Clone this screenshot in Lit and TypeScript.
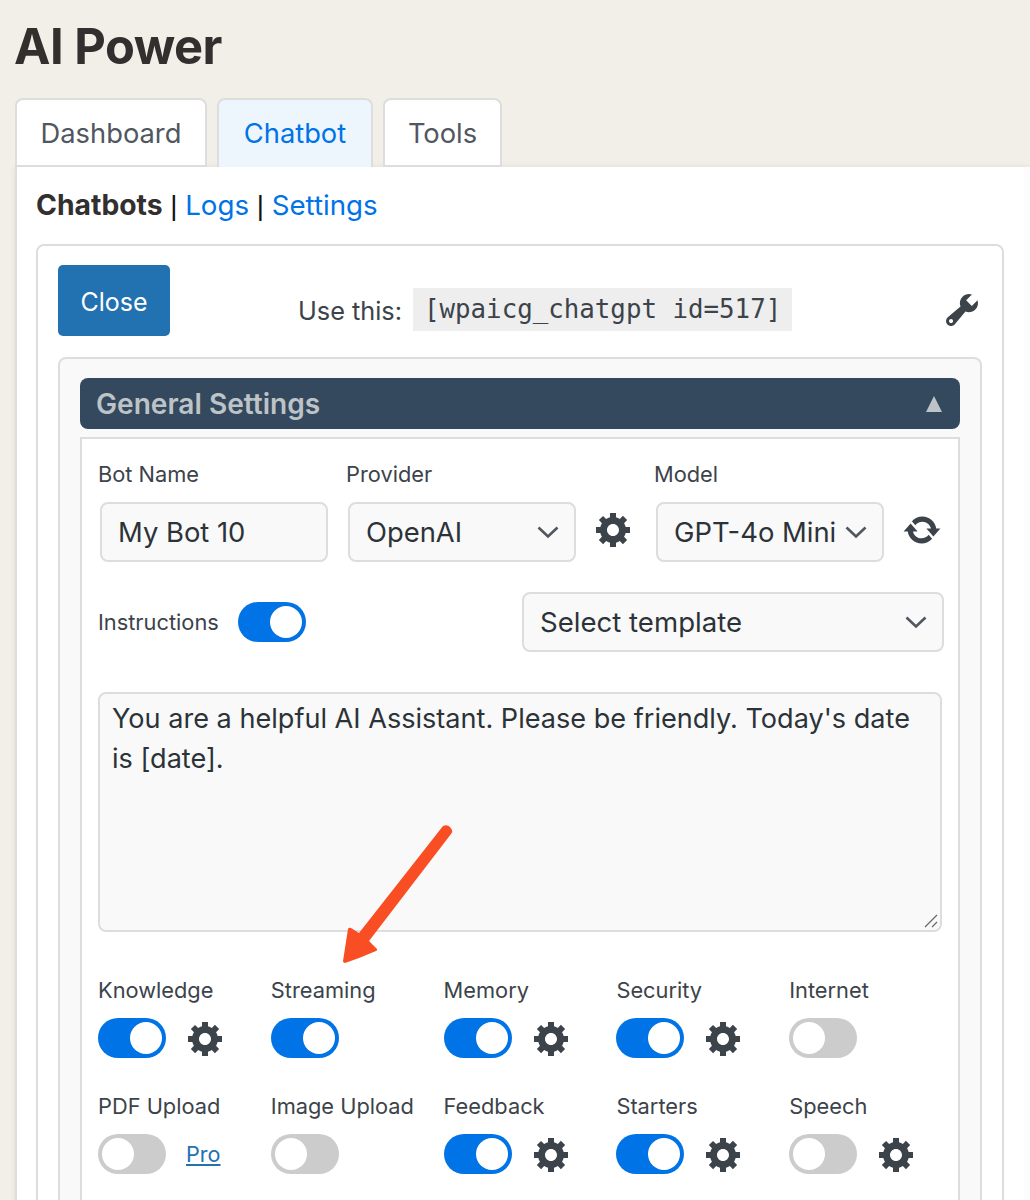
import { LitElement, css, html, svg } from 'lit';
import { customElement } from 'lit/decorators.js';

const gearPath =
  'M18 12h-2.18c-.17.7-.44 1.35-.81 1.93l1.54 1.54-2.1 2.1-1.54-1.54c-.58.36-1.23.63-1.91.79V19H8v-2.18c-.68-.16-1.33-.43-1.91-.79l-1.54 1.54-2.12-2.12 1.54-1.54c-.36-.58-.63-1.23-.79-1.91H1V9.03h2.17c.16-.7.44-1.35.8-1.94L2.43 5.55l2.1-2.1 1.54 1.54c.58-.37 1.24-.64 1.93-.81V2h3v2.18c.68.16 1.33.43 1.91.79l1.54-1.54 2.12 2.12-1.54 1.54c.36.59.64 1.24.8 1.94H18V12zm-8.5 1.5c1.66 0 3-1.34 3-3s-1.34-3-3-3-3 1.34-3 3 1.34 3 3 3z';
const wrenchPath =
  'M16.68 9.77c-1.34 1.34-3.3 1.67-4.95.99l-5.41 6.52c-.99.99-2.59.99-3.58 0s-.99-2.59 0-3.57l6.52-5.42c-.68-1.65-.35-3.61.99-4.95 1.28-1.28 3.12-1.62 4.72-1.06l-2.89 2.89 2.82 2.82 2.86-2.87c.53 1.58.18 3.39-1.08 4.67zM3.81 16.21c.4.39 1.04.39 1.43 0 .4-.4.4-1.04 0-1.43-.39-.4-1.03-.4-1.43 0-.39.39-.39 1.03 0 1.43z';
const refreshPath =
  'M10.2 3.28c3.53 0 6.43 2.61 6.92 6h2.08l-3.5 4-3.5-4h2.32c-.45-1.97-2.21-3.45-4.32-3.45-1.45 0-2.73.71-3.54 1.78L4.95 5.66C6.23 4.2 8.11 3.28 10.2 3.28zm-.4 13.44c-3.52 0-6.43-2.61-6.92-6H.8l3.5-4c1.17 1.33 2.33 2.67 3.5 4H5.48c.45 1.97 2.21 3.45 4.32 3.45 1.45 0 2.73-.71 3.54-1.77l1.71 1.95c-1.28 1.46-3.15 2.37-5.25 2.37z';

const icon = (d: string, cls = '') =>
  html`<svg class="icon ${cls}" viewBox="0 0 20 20" fill="currentColor">${svg`<path d=${d}></path>`}</svg>`;

const chevron = html`<svg class="chevron" viewBox="0 0 24 14" fill="none">
  <path d="M2.5 2.5 12 11.5 21.5 2.5" stroke="#50575e" stroke-width="2.6"></path>
</svg>`;

const toggles = [
  { label: 'Knowledge', on: true, gear: true },
  { label: 'Streaming', on: true },
  { label: 'Memory', on: true, gear: true },
  { label: 'Security', on: true, gear: true },
  { label: 'Internet', on: false },
  { label: 'PDF Upload', on: false, pro: true },
  { label: 'Image Upload', on: false },
  { label: 'Feedback', on: true, gear: true },
  { label: 'Starters', on: true, gear: true },
  { label: 'Speech', on: false, gear: true },
];

@customElement('app-root')
export class AppRoot extends LitElement {
  static styles = css`
    :host {
      display: block;
      height: 1200px;
      overflow: hidden;
      position: relative;
      background: #f1efe8;
      font-family: Inter, 'Liberation Sans', sans-serif;
      color: #3c434a;
    }

    h1 {
      margin: 0;
      padding: 21px 0 0 14px;
      height: 98px;
      box-sizing: border-box;
      font-size: 48.8px;
      line-height: 52px;
      font-weight: 700;
      letter-spacing: -0.5px;
      color: #32302e;
    }

    .tabs {
      display: flex;
      gap: 10px;
      padding-left: 15px;
      height: 69px;
    }

    .tab {
      box-sizing: border-box;
      height: 69px;
      padding-top: 15px;
      text-align: center;
      font-size: 27.3px;
      line-height: 38px;
      color: #50575e;
      background: #fff;
      border: 2px solid #ddd;
      border-radius: 8px 8px 0 0;
    }

    .tab.dash { width: 192px; }
    .tab.bot { width: 156px; color: #0073e6; background: #eef6fd; border-bottom: 0; }
    .tab.tools { width: 119px; }

    .card {
      box-sizing: border-box;
      margin-left: 15px;
      height: 1100px;
      padding: 19px 20px 0 19px;
      background: linear-gradient(to right, #fff calc(100% - 6px), #fcfcfc calc(100% - 6px));
      border-left: 2px solid #ddd;
      box-shadow: 0 0 6px rgba(0, 0, 0, 0.08);
    }

    .subnav {
      font-size: 27.7px;
      line-height: 38px;
      color: #111;
      height: 58px;
    }

    .subnav b { color: #32302e; font-weight: 700; font-size: 28.3px; }
    .subnav a { color: #0073e6; text-decoration: none; }
    .subnav .sep { font-family: 'Liberation Sans', sans-serif; }

    .outer {
      box-sizing: border-box;
      width: 968px;
      height: 1000px;
      padding: 19px 20px;
      border: 2px solid #ddd;
      border-radius: 8px 8px 0 0;
    }

    .top {
      display: flex;
      align-items: flex-start;
      height: 92px;
    }

    .close {
      box-sizing: border-box;
      width: 112px;
      height: 71px;
      padding: 2px 0 0;
      border: 0;
      border-radius: 5px;
      background: #2271b1;
      color: #fff;
      font: 400 25px Inter, sans-serif;
    }

    .use {
      display: flex;
      align-items: center;
      margin-left: 128px;
      margin-top: 23px;
      height: 43px;
      font-size: 25.3px;
      white-space: nowrap;
    }

    .use span { padding-top: 2px; }

    code {
      box-sizing: border-box;
      width: 379px;
      height: 43px;
      margin-left: 11px;
      padding-left: 11px;
      background: #eeeeee;
      font: 25.8px/43px 'DejaVu Sans Mono', monospace;
      color: #3c434a;
      white-space: nowrap;
    }

    .icon {
      display: block;
      width: 40px;
      height: 40px;
      flex: none;
      color: #3c434a;
    }

    .wrench { margin: 25px 0 0 150px; }

    .inner {
      box-sizing: border-box;
      width: 924px;
      height: 900px;
      padding: 19px 20px;
      background: #f9f9f9;
      border: 2px solid #ddd;
      border-radius: 8px 8px 0 0;
    }

    .head {
      display: flex;
      align-items: center;
      justify-content: space-between;
      height: 51px;
      padding: 0 18px 0 16px;
      border-radius: 8px;
      background: #34495e;
      color: #bdc3c7;
      font-size: 28.1px;
      font-weight: 600;
    }

    .tri {
      width: 0;
      height: 0;
      border-left: 8px solid transparent;
      border-right: 8px solid transparent;
      border-bottom: 16px solid #bdc3c7;
    }

    .panel {
      box-sizing: border-box;
      height: 800px;
      margin-top: 8px;
      padding: 20px 16px 0;
      background: #fff;
      border: 2px solid #ddd;
      border-bottom: 0;
    }

    .row-fields {
      display: grid;
      grid-template-columns: 248px 308px 1fr;
    }

    .lbl {
      font-size: 21.8px;
      line-height: 30px;
      color: #3c434a;
      white-space: nowrap;
    }

    .field-line {
      display: flex;
      align-items: center;
      margin-top: 13px;
      padding-left: 2px;
    }

    .box {
      box-sizing: border-box;
      display: flex;
      align-items: center;
      justify-content: space-between;
      width: 228px;
      height: 60px;
      padding: 0 14px 0 16px;
      background: #f9f9f9;
      border: 2px solid #ddd;
      border-radius: 8px;
      font-size: 27.4px;
      color: #2c3338;
      white-space: nowrap;
    }

    .chevron { width: 24px; height: 14px; flex: none; }

    .field-line .icon { margin-left: 18px; margin-top: -6px; }
    .field-line .icon.sync { margin-left: 18px; margin-top: -4px; }

    .row-instr {
      display: flex;
      align-items: center;
      height: 60px;
      margin-top: 30px;
    }

    .row-instr .lbl { width: 120px; }
    .row-instr .switch { margin-left: 20px; }
    .row-instr .box { width: 422px; margin-left: auto; margin-right: -2px; font-size: 27.6px; }

    .switch {
      box-sizing: border-box;
      display: flex;
      align-items: center;
      width: 68px;
      height: 40px;
      padding: 4px;
      border-radius: 20px;
      background: #ccc;
      flex: none;
    }

    .switch.on { background: #0073e6; justify-content: flex-end; }
    .switch i { display: block; width: 32px; height: 32px; border-radius: 50%; background: #fff; }

    .prompt {
      box-sizing: border-box;
      height: 240px;
      margin-top: 40px;
      padding: 5px 12px;
      position: relative;
      background: #f9f9f9;
      border: 2px solid #ddd;
      border-radius: 8px;
      font-size: 27.1px;
      line-height: 40px;
      color: #2c3338;
      width: 844px;
    }

    .grip { position: absolute; right: 1px; bottom: 1px; width: 16px; height: 16px; }

    .grid {
      display: grid;
      grid-template-columns: repeat(5, 172.8px);
      grid-auto-rows: 116.4px;
      margin-top: 43px;
    }

    .item .line {
      display: flex;
      align-items: center;
      height: 40px;
      margin-top: 13px;
    }

    .item .icon { margin-left: 20px; }

    .pro {
      margin-left: 20px;
      color: #2271b1;
      font-size: 21.6px;
      text-decoration: underline;
    }

    .arrow {
      position: absolute;
      left: 0;
      top: 0;
      width: 1030px;
      height: 1200px;
      pointer-events: none;
    }
  `;

  private renderToggle(t: (typeof toggles)[number]) {
    return html`<div class="item">
      <div class="lbl">${t.label}</div>
      <div class="line">
        <span class="switch ${t.on ? 'on' : ''}"><i></i></span>
        ${t.gear ? icon(gearPath) : ''} ${t.pro ? html`<a class="pro">Pro</a>` : ''}
      </div>
    </div>`;
  }

  render() {
    return html`
      <h1>AI Power</h1>
      <div class="tabs">
        <div class="tab dash">Dashboard</div>
        <div class="tab bot">Chatbot</div>
        <div class="tab tools">Tools</div>
      </div>
      <div class="card">
        <div class="subnav"><b>Chatbots</b><span class="sep"> | </span><a>Logs</a><span class="sep"> | </span><a>Settings</a></div>
        <div class="outer">
          <div class="top">
            <button class="close">Close</button>
            <div class="use"><span>Use this:</span> <code>[wpaicg_chatgpt id=517]</code></div>
            <span class="wrench">${icon(wrenchPath)}</span>
          </div>
          <div class="inner">
            <div class="head"><span>General Settings</span><span class="tri"></span></div>
            <div class="panel">
              <div class="row-fields">
                <div>
                  <div class="lbl">Bot Name</div>
                  <div class="field-line"><div class="box">My Bot 10</div></div>
                </div>
                <div>
                  <div class="lbl">Provider</div>
                  <div class="field-line">
                    <div class="box">OpenAI ${chevron}</div>
                    ${icon(gearPath)}
                  </div>
                </div>
                <div>
                  <div class="lbl">Model</div>
                  <div class="field-line">
                    <div class="box">GPT-4o Mini ${chevron}</div>
                    ${icon(refreshPath, 'sync')}
                  </div>
                </div>
              </div>
              <div class="row-instr">
                <span class="lbl">Instructions</span>
                <span class="switch on"><i></i></span>
                <div class="box">Select template ${chevron}</div>
              </div>
              <div class="prompt">
                You are a helpful AI Assistant. Please be friendly. Today's date is [date].
                <svg class="grip" viewBox="0 0 16 16" fill="none" stroke="#666" stroke-width="1.2">
                  <path d="M2 14 14 2M9 14 14 9"></path>
                </svg>
              </div>
              <div class="grid">${toggles.map((t) => this.renderToggle(t))}</div>
            </div>
          </div>
        </div>
      </div>
      <svg class="arrow" viewBox="0 0 1030 1200">
        <path
          d="M443 826 Q447 824 450 827 L452 830 Q453 832 451 834 L369 941 L377 949 Q378 950 376 951 Q360 958 345 963 Q343 963 343 961 L348 929 Q349 927 351 928 L359 933 Z"
          fill="#f94d24"
        ></path>
      </svg>
    `;
  }
}
